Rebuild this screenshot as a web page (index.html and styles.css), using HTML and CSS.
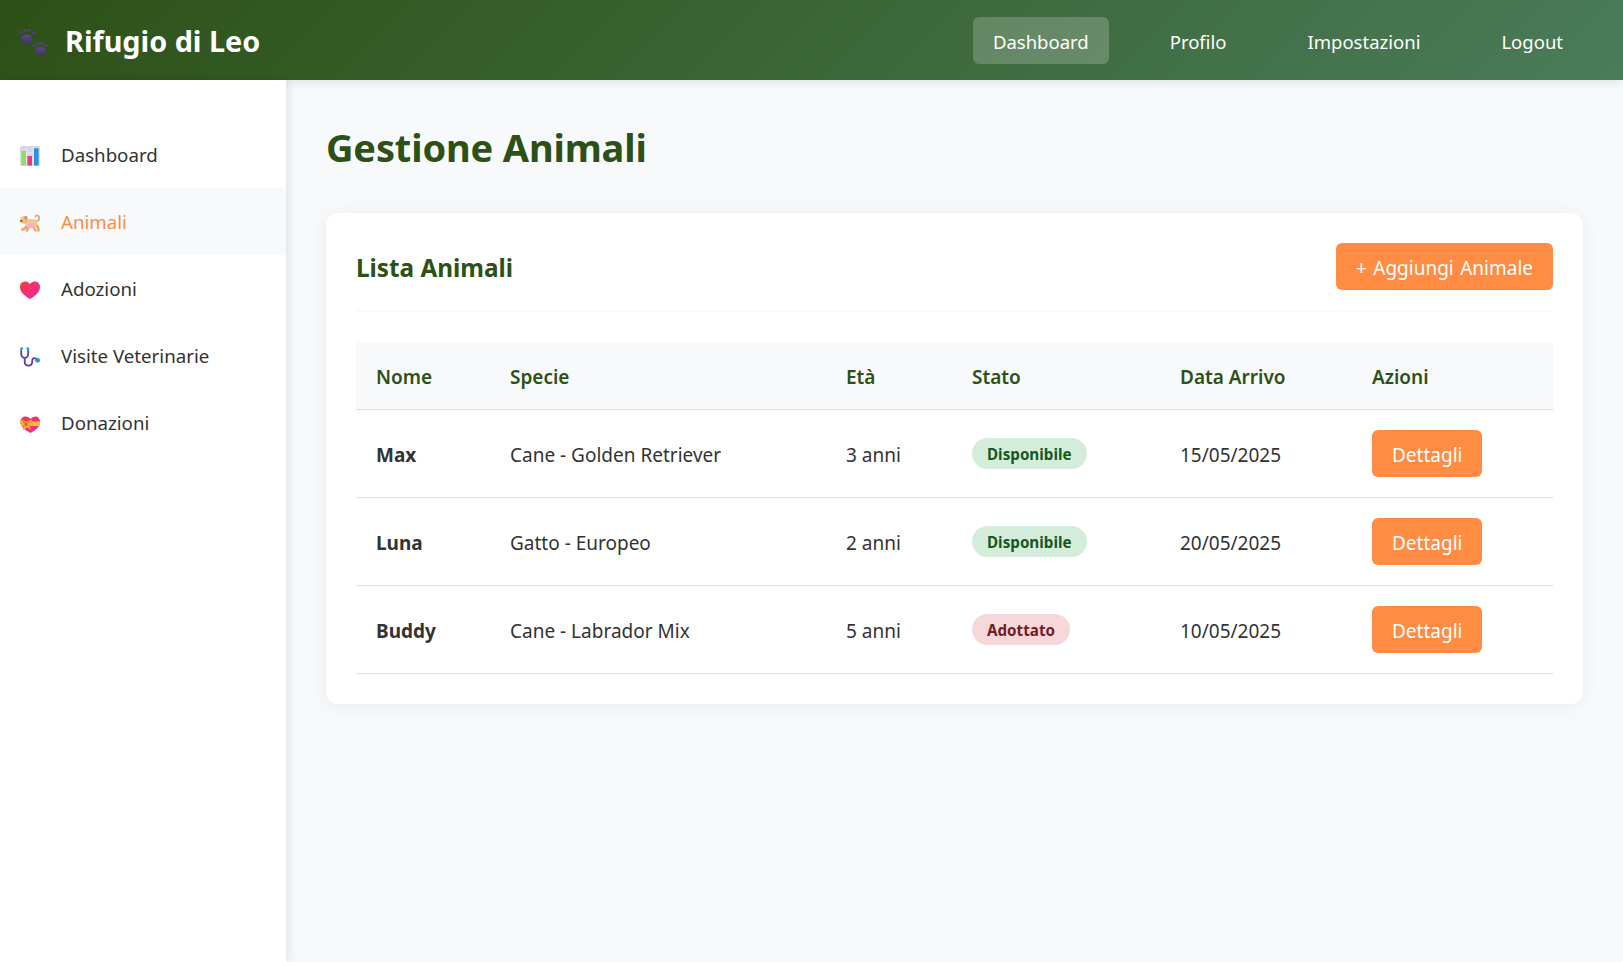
FILE: index.html
```html
<!DOCTYPE html>
<html lang="it">

<head>
    <meta charset="UTF-8">
    <meta name="viewport" content="width=device-width, initial-scale=1.0">
    <title>Rifugio di Leo</title>
    <link rel="stylesheet" href="styles.css">
</head>

<body>
    <header class="topbar">
        <div class="logo">
            <svg class="logo-icon" viewBox="0 0 29 26">
                <defs>
                    <linearGradient id="paw" x1="0" y1="0" x2="0" y2="1">
                        <stop offset="0" stop-color="#5a4a80"/>
                        <stop offset="1" stop-color="#46306f"/>
                    </linearGradient>
                </defs>
                <g fill="url(#paw)">
                    <ellipse cx="8" cy="10" rx="5.500" ry="4.500"/>
                    <circle cx="1.900" cy="4" r="1.800"/><circle cx="6" cy="2" r="1.800"/><circle cx="10" cy="2" r="1.800"/><circle cx="14.500" cy="4" r="1.800"/>
                    <ellipse cx="21.500" cy="22" rx="5.500" ry="4"/>
                    <circle cx="15" cy="17" r="1.800"/><circle cx="19" cy="15" r="1.800"/><circle cx="23" cy="15" r="1.800"/><circle cx="27" cy="17" r="1.800"/>
                </g>
            </svg>
            <span class="logo-text">Rifugio di Leo</span>
        </div>
        <nav class="topnav">
            <a class="topnav-link active" href="#">Dashboard</a>
            <a class="topnav-link" href="#">Profilo</a>
            <a class="topnav-link" href="#">Impostazioni</a>
            <a class="topnav-link" href="#">Logout</a>
        </nav>
    </header>

    <div class="layout">
        <aside class="sidebar">
            <a class="side-link" href="#">
                <svg class="side-icon" viewBox="0 0 20 20">
                    <rect width="20" height="20" rx="2" fill="#d8d6e4"/>
                    <path d="M6.600 0v20M13.200 0v20M0 7h20M0 13.500h20" stroke="#eeedf3" stroke-width="0.700"/>
                    <rect x="1.400" y="5" width="4.600" height="14.500" fill="#8fdc68"/>
                    <rect x="7.400" y="10" width="4.600" height="9.500" fill="#f0367f"/>
                    <rect x="14" y="2.300" width="4.600" height="17.200" fill="#2a90e0"/>
                </svg>
                Dashboard
            </a>
            <a class="side-link active" href="#">
                <svg class="side-icon" viewBox="0 0 20 20">
                    <g fill="none" stroke="#eca468" stroke-linecap="round">
                        <path d="M14.500 8C18.500 9.500 20 6 19 3.800 18 1.800 15.500 2 15.500 3.500" stroke-width="1.800"/>
                        <path d="M7 12.500L5 15.500 2.300 16.500" stroke-width="2.600"/>
                        <path d="M9 13.500L7 17.500" stroke-width="2.400"/>
                        <path d="M14 12L14 15 15.500 17.500" stroke-width="2.400"/>
                        <path d="M15.500 11L18 14.500 18.500 17.500" stroke-width="2.600"/>
                    </g>
                    <path d="M5.500 7c3-1.500 8-1.500 10.500 0 1.500 2.500 1 6-1.500 7H8C5.500 13.500 4.500 10 5.500 7z" fill="#f5c493"/>
                    <ellipse cx="10.500" cy="13" rx="4" ry="2" fill="#f6b0c6"/>
                    <circle cx="4.200" cy="7" r="3.800" fill="#f3bd85"/>
                    <ellipse cx="1.300" cy="8" rx="1.300" ry="1.100" fill="#8a5236"/>
                    <ellipse cx="5.800" cy="4.800" rx="1.600" ry="2" fill="#dd9358"/>
                </svg>
                Animali
            </a>
            <a class="side-link" href="#">
                <svg class="side-icon" viewBox="0 0 20 20">
                    <defs>
                        <linearGradient id="heart" x1="0.100" y1="0" x2="0.700" y2="1">
                            <stop offset="0" stop-color="#f23a48"/>
                            <stop offset="1" stop-color="#f0289a"/>
                        </linearGradient>
                    </defs>
                    <path d="M10 19C4 15.500 0 12 0 7 0 3.600 2.400 1.500 5.200 1.500 7.300 1.500 9 2.500 10 4.300c1-1.800 2.700-2.800 4.800-2.800C17.600 1.500 20 3.600 20 7c0 5-4 8.500-10 12z" fill="url(#heart)"/>
                </svg>
                Adozioni
            </a>
            <a class="side-link" href="#">
                <svg class="side-icon" viewBox="0 0 20 20">
                    <g fill="none" stroke-width="1.800">
                        <path d="M1.200 3v3.500c0 2.500 1.500 4.500 3.500 4.500s3.500-2 3.500-4.500V3M4.700 11v3.500c0 5.500 7.500 5.500 7.500 0 0-4 3-4.500 5-1.500" stroke="#5c3fa0"/>
                        <path d="M3 1.300H1.200V4M6.400 1.300h1.800V4" stroke="#2a8fe4"/>
                    </g>
                    <circle cx="17.600" cy="13.300" r="2.400" fill="#2a8fe4"/>
                </svg>
                Visite Veterinarie
            </a>
            <a class="side-link" href="#">
                <svg class="side-icon" viewBox="0 0 20 20">
                    <defs>
                        <linearGradient id="gift" x1="0" y1="0" x2="0.500" y2="1">
                            <stop offset="0" stop-color="#f03a4a"/>
                            <stop offset="1" stop-color="#f02c96"/>
                        </linearGradient>
                    </defs>
                    <path d="M10.500 19C5 16 .5 13 .5 7.500.5 4.500 3 2.500 5.500 2.500 7.500 2.500 9.500 3.500 10.500 5c1-1.500 3-2.500 5-2.500 2.500 0 4.500 2 4.500 5C20 13 16 16 10.500 19z" fill="url(#gift)"/>
                    <path d="M.5 7.500h19.500v4.500H1.200z" fill="#f9b93a"/>
                    <path d="M1 5.500l5.500 2.500 5-2.500 1 4-3 1.500 1.500 4.500-4-2-4 3 .5-4.500L0 10z" fill="#f7a52c"/>
                    <path d="M3 8l3 2 3-2" fill="none" stroke="#d9641f" stroke-width="0.800"/>
                    <circle cx="6" cy="10.500" r="1.400" fill="#d9641f"/>
                </svg>
                Donazioni
            </a>
        </aside>

        <main class="content">
            <h1 class="page-title">Gestione Animali</h1>
            <section class="card">
                <div class="card-head">
                    <h2 class="card-title">Lista Animali</h2>
                    <a class="btn btn-add" href="#">+ Aggiungi Animale</a>
                </div>
                <table class="table">
                    <thead>
                        <tr>
                            <th class="col-name">Nome</th>
                            <th class="col-species">Specie</th>
                            <th class="col-age">Età</th>
                            <th class="col-state">Stato</th>
                            <th class="col-date">Data Arrivo</th>
                            <th>Azioni</th>
                        </tr>
                    </thead>
                    <tbody>
                        <tr>
                            <td><strong>Max</strong></td>
                            <td>Cane - Golden Retriever</td>
                            <td>3 anni</td>
                            <td class="cell-box"><span class="badge free">Disponibile</span></td>
                            <td>15/05/2025</td>
                            <td class="cell-box"><a class="btn" href="#">Dettagli</a></td>
                        </tr>
                        <tr>
                            <td><strong>Luna</strong></td>
                            <td>Gatto - Europeo</td>
                            <td>2 anni</td>
                            <td class="cell-box"><span class="badge free">Disponibile</span></td>
                            <td>20/05/2025</td>
                            <td class="cell-box"><a class="btn" href="#">Dettagli</a></td>
                        </tr>
                        <tr>
                            <td><strong>Buddy</strong></td>
                            <td>Cane - Labrador Mix</td>
                            <td>5 anni</td>
                            <td class="cell-box"><span class="badge taken">Adottato</span></td>
                            <td>10/05/2025</td>
                            <td class="cell-box"><a class="btn" href="#">Dettagli</a></td>
                        </tr>
                    </tbody>
                </table>
            </section>
        </main>
    </div>
</body>

</html>
```

FILE: styles.css
```css
* {
    margin: 0;
    padding: 0;
    box-sizing: border-box;
}

html,
body {
    height: 100%;
    overflow: hidden;
}

body {
    font-family: "Noto Sans", "Open Sans", sans-serif;
    background-color: #f8f9fa;
    color: #333;
    font-size: 19px;
    display: flex;
    flex-direction: column;
}

a {
    text-decoration: none;
    color: inherit;
}

.topbar {
    position: relative;
    z-index: 2;
    flex: none;
    height: 80px;
    display: flex;
    align-items: center;
    justify-content: space-between;
    padding: 0 40px 0 19px;
    background: linear-gradient(135deg, #2d5016, #4a7c59);
    box-shadow: 0 2px 10px rgba(0, 0, 0, 0.1);
    color: #fff;
}

.logo {
    display: flex;
    align-items: center;
    gap: 17px;
}

.logo-icon {
    width: 29px;
    height: 26px;
    margin-top: 3px;
}

.logo-text {
    font-size: 28.800px;
    font-weight: 700;
}

.topnav {
    display: flex;
    gap: 41px;
}

.topnav-link {
    padding: 11px 20px 9px;
    border-radius: 6px;
    font-size: 18.500px;
    line-height: 27px;
}

.topnav-link.active {
    background-color: rgba(255, 255, 255, 0.2);
}

.layout {
    flex: 1;
    display: flex;
    min-height: 0;
}

.sidebar {
    position: relative;
    z-index: 3;
    flex: none;
    width: 286px;
    padding-top: 41px;
    background-color: #fff;
    box-shadow: 2px 0 10px rgba(0, 0, 0, 0.1);
}

.side-link {
    display: flex;
    align-items: center;
    gap: 21px;
    height: 67px;
    padding-left: 20px;
    font-size: 18.700px;
}

.side-link.active {
    background-color: #f8f9fa;
    color: #ff8c42;
}

.side-icon {
    width: 20px;
    height: 20px;
    flex: none;
    margin-top: 2px;
}

.content {
    flex: 1;
    padding: 40px;
}

.page-title {
    font-size: 38px;
    font-weight: 700;
    letter-spacing: -0.15px;
    color: #2d5016;
    line-height: 55px;
    margin-bottom: 38px;
}

.card {
    background-color: #fff;
    border-radius: 12px;
    padding: 30px;
    box-shadow: 0 2px 20px rgba(0, 0, 0, 0.06);
}

.card-head {
    display: flex;
    align-items: center;
    justify-content: space-between;
    padding-bottom: 20px;
    margin-bottom: 30px;
    border-bottom: 2px solid #f8f9fa;
}

.card-title {
    font-size: 24.300px;
    font-weight: 700;
    color: #2d5016;
    margin-top: 2px;
}

.btn {
    display: inline-block;
    padding: 12px 20px 8px;
    border-radius: 6px;
    background-color: #ff8c42;
    color: #fff;
    line-height: 27px;
}

.btn-add {
    word-spacing: 1.500px;
}

.table {
    width: 100%;
    border-collapse: collapse;
}

.table th {
    text-align: left;
    height: 67px;
    padding: 3px 20px 0;
    background-color: #f8f9fa;
    color: #2d5016;
    font-weight: 600;
    border-bottom: 1px solid #e0e0e0;
}

.table td {
    height: 88px;
    padding: 3px 20px 0;
    border-bottom: 1px solid #e0e0e0;
}

.table td.cell-box {
    padding-top: 0;
}

.cell-box .btn,
.cell-box .badge {
    vertical-align: middle;
}

.col-name {
    width: 134px;
}

.col-species {
    width: 336px;
}

.col-age {
    width: 126px;
}

.col-state {
    width: 208px;
}

.col-date {
    width: 192px;
}

.badge {
    display: inline-block;
    padding: 6px 15px 4px;
    border-radius: 20px;
    font-size: 15.200px;
    font-weight: 700;
    line-height: 21px;
}

.badge.free {
    background-color: #d4edda;
    color: #155724;
}

.badge.taken {
    background-color: #f8d7da;
    color: #721c24;
}
```
